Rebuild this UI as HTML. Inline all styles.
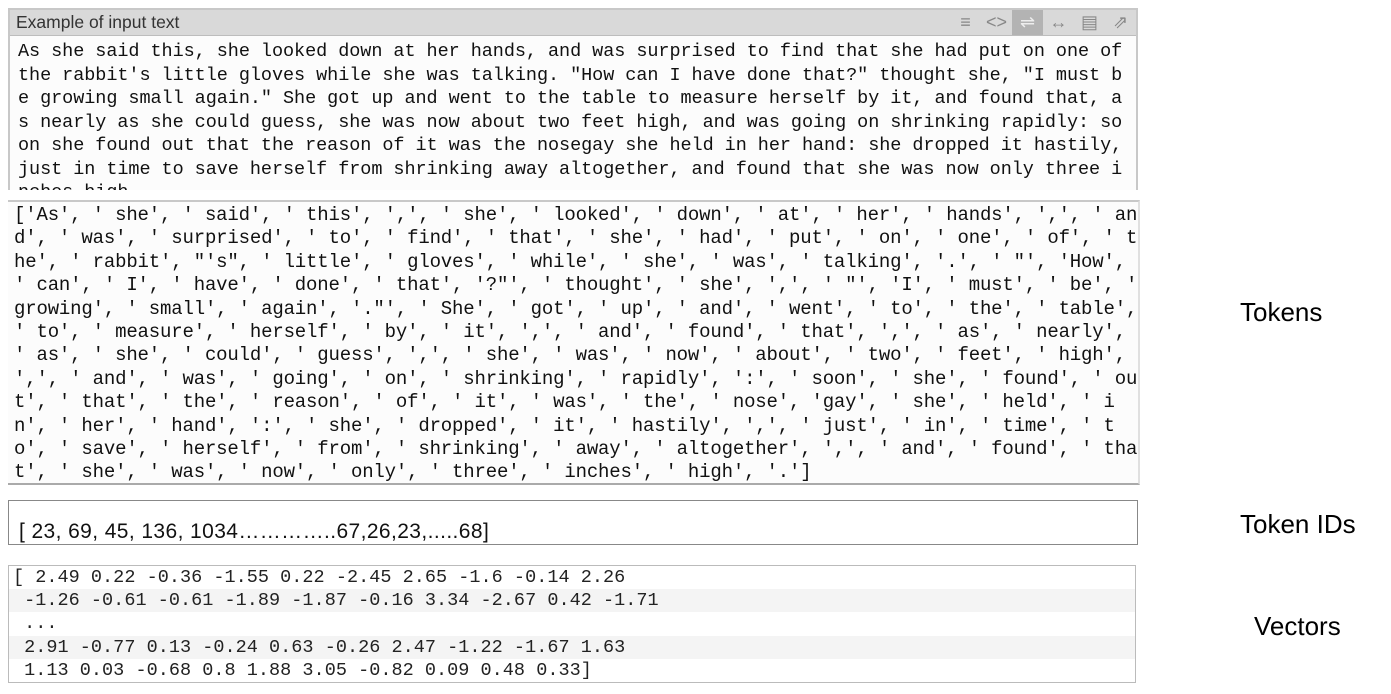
<!DOCTYPE html>
<html><head><meta charset="utf-8"><style>
body{margin:0;width:1391px;height:694px;background:#fff;position:relative;overflow:hidden;font-family:"Liberation Sans",Arial,sans-serif;}
.mono{font-family:"Liberation Mono","DejaVu Sans Mono",monospace;white-space:pre;color:#111;}
#b1{position:absolute;left:8px;top:8px;width:1126px;height:180px;border:2px solid #c8c8c8;border-bottom:none;overflow:hidden;background:#fcfcfc;}
#hd{height:25px;background:#d9d9d9;border-bottom:1px solid #bdbdbd;font-size:17.5px;line-height:25px;padding-left:6px;color:#333;position:relative;}
#ic{position:absolute;right:0;top:0;height:25px;display:flex;font-size:18px;color:#888;}
#ic span{width:31px;text-align:center;}
#ic .on{background:#b3b3b3;color:#eee;}
#t1{font-size:18.5px;line-height:23.5px;padding:4px 0 0 8px;letter-spacing:-0.06px;}
#b2{position:absolute;left:8px;top:200px;width:1130px;height:281px;border-top:2px solid #c8c8c8;border-bottom:2px solid #aaa;border-right:2px solid #e0e0e0;background:#fcfcfc;overflow:hidden;}
#t2{font-size:19px;line-height:23.4px;padding:2px 0 0 6px;letter-spacing:-0.17px;}
#b3{position:absolute;left:8px;top:500px;width:1128px;height:43px;border:1.5px solid #888;}
#b3 div{position:absolute;left:10px;top:19px;font-size:21px;letter-spacing:0.4px;color:#111;white-space:nowrap;}
#b4{position:absolute;left:8px;top:565px;width:1126px;height:116px;border:1.5px solid #bbb;}
#b4 div{font-family:"Liberation Mono","DejaVu Sans Mono",monospace;white-space:pre;font-size:18.5px;height:23.2px;line-height:23.2px;padding-left:4px;letter-spacing:0.03px;color:#222;}
#b4 .g{background:#f4f4f4;}
.lab{position:absolute;font-size:26px;color:#000;}
</style></head><body>
<div id="b1"><div id="hd">Example of input text<div id="ic"><span>&#8801;</span><span>&lt;&gt;</span><span class="on">&#8652;</span><span>&#8596;</span><span>&#9636;</span><span>&#8663;</span></div></div>
<div id="t1" class="mono">As she said this, she looked down at her hands, and was surprised to find that she had put on one of
the rabbit's little gloves while she was talking. "How can I have done that?" thought she, "I must b
e growing small again." She got up and went to the table to measure herself by it, and found that, a
s nearly as she could guess, she was now about two feet high, and was going on shrinking rapidly: so
on she found out that the reason of it was the nosegay she held in her hand: she dropped it hastily,
just in time to save herself from shrinking away altogether, and found that she was now only three i
nches high.</div></div>
<div id="b2"><div id="t2" class="mono">['As', ' she', ' said', ' this', ',', ' she', ' looked', ' down', ' at', ' her', ' hands', ',', ' an
d', ' was', ' surprised', ' to', ' find', ' that', ' she', ' had', ' put', ' on', ' one', ' of', ' t
he', ' rabbit', "'s", ' little', ' gloves', ' while', ' she', ' was', ' talking', '.', ' "', 'How',
' can', ' I', ' have', ' done', ' that', '?"', ' thought', ' she', ',', ' "', 'I', ' must', ' be', '
growing', ' small', ' again', '."', ' She', ' got', ' up', ' and', ' went', ' to', ' the', ' table',
' to', ' measure', ' herself', ' by', ' it', ',', ' and', ' found', ' that', ',', ' as', ' nearly',
' as', ' she', ' could', ' guess', ',', ' she', ' was', ' now', ' about', ' two', ' feet', ' high',
',', ' and', ' was', ' going', ' on', ' shrinking', ' rapidly', ':', ' soon', ' she', ' found', ' ou
t', ' that', ' the', ' reason', ' of', ' it', ' was', ' the', ' nose', 'gay', ' she', ' held', ' i
n', ' her', ' hand', ':', ' she', ' dropped', ' it', ' hastily', ',', ' just', ' in', ' time', ' t
o', ' save', ' herself', ' from', ' shrinking', ' away', ' altogether', ',', ' and', ' found', ' tha
t', ' she', ' was', ' now', ' only', ' three', ' inches', ' high', '.']</div></div>
<div id="b3"><div>[ 23, 69, 45, 136, 1034…………..67,26,23,.....68]</div></div>
<div id="b4">
<div>[ 2.49 0.22 -0.36 -1.55 0.22 -2.45 2.65 -1.6 -0.14 2.26</div>
<div class="g"> -1.26 -0.61 -0.61 -1.89 -1.87 -0.16 3.34 -2.67 0.42 -1.71</div>
<div> ...</div>
<div class="g"> 2.91 -0.77 0.13 -0.24 0.63 -0.26 2.47 -1.22 -1.67 1.63</div>
<div> 1.13 0.03 -0.68 0.8 1.88 3.05 -0.82 0.09 0.48 0.33]</div>
</div>
<div class="lab" style="left:1240px;top:297px">Tokens</div>
<div class="lab" style="left:1240px;top:509px">Token IDs</div>
<div class="lab" style="left:1254px;top:611px">Vectors</div>
</body></html>
